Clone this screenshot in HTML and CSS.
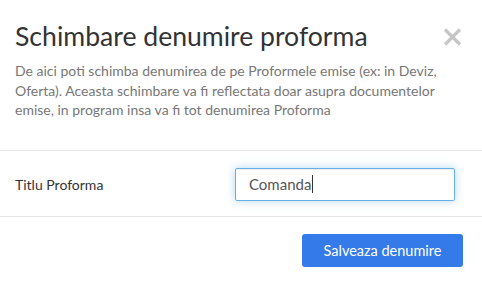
FILE: index.html
```html
<!DOCTYPE html>
<html lang="ro">
<head>
    <meta charset="UTF-8">
    <meta name="viewport" content="width=device-width, initial-scale=1.0">
    <title>Schimbare denumire proforma</title>
    <link rel="stylesheet" href="styles.css">
</head>
<body>
    <div class="modal">
        <div class="modal-header">
            <div class="title-row">
                <h4 class="modal-title">Schimbare denumire proforma</h4>
                <button class="close" type="button" aria-label="Inchide">
                    <svg width="19" height="18" viewBox="0 0 19 18">
                        <path d="M2 1.5 L17 16.5 M17 1.5 L2 16.5" stroke="#c6c6c6" stroke-width="3.2" stroke-linecap="butt"/>
                    </svg>
                </button>
            </div>
            <p class="modal-desc">De aici poti schimba denumirea de pe Proformele emise (ex: in Deviz, Oferta). Aceasta schimbare va fi reflectata doar asupra documentelor emise, in program insa va fi tot denumirea Proforma</p>
        </div>

        <div class="modal-body">
            <label class="field-label">Titlu Proforma</label>
            <div class="form-control focused"><span>Comanda</span><span class="caret"></span></div>
        </div>

        <div class="modal-footer">
            <button class="btn btn-primary" type="button">Salveaza denumire</button>
        </div>
    </div>
</body>
</html>
```

FILE: styles.css
```css
* { box-sizing: border-box; margin: 0; padding: 0; }
body { font-family: Lato, "Open Sans", sans-serif; background: #fff; color: #333; font-size: 14px; }
.modal { width: 482px; }
.modal-header {
    padding: 22px 20px 30px 15px;
    border-bottom: 1px solid #e5e5e5;
}
.title-row {
    display: flex;
    justify-content: space-between;
    align-items: center;
}
.modal-title {
    font-size: 26.6px;
    font-weight: 400;
    line-height: 1.1;
    color: #333;
}
.close {
    background: none;
    border: none;
    display: flex;
    cursor: pointer;
}
.modal-desc {
    margin-top: 10px;
    line-height: 19.5px;
    color: #777;
}
.modal-body {
    display: flex;
    align-items: center;
    justify-content: space-between;
    padding: 17px 27px 15px 15px;
    border-bottom: 1px solid #e5e5e5;
}
.field-label { color: #333; font-weight: 400; }
.form-control {
    width: 220px;
    height: 33px;
    padding: 0 13px;
    display: flex;
    align-items: center;
    border: 1px solid #ccc;
    border-radius: 2px;
    color: #555;
    font-size: 15px;
}
.form-control.focused {
    border-color: #66afe9;
    box-shadow: inset 0 1px 1px rgba(0,0,0,.075), 0 0 8px rgba(102,175,233,.5);
}
.caret {
    display: inline-block;
    width: 1px;
    height: 18px;
    background: #333;
    margin-left: 1px;
}
.modal-footer {
    display: flex;
    justify-content: flex-end;
    padding: 17px 19px 15px 15px;
}
.btn {
    border: none;
    border-radius: 3px;
    cursor: pointer;
    font-family: inherit;
    font-size: 14.5px;
    height: 33px;
    width: 161px;
}
.btn-primary {
    background: #357ae9;
    color: #fff;
}
```
